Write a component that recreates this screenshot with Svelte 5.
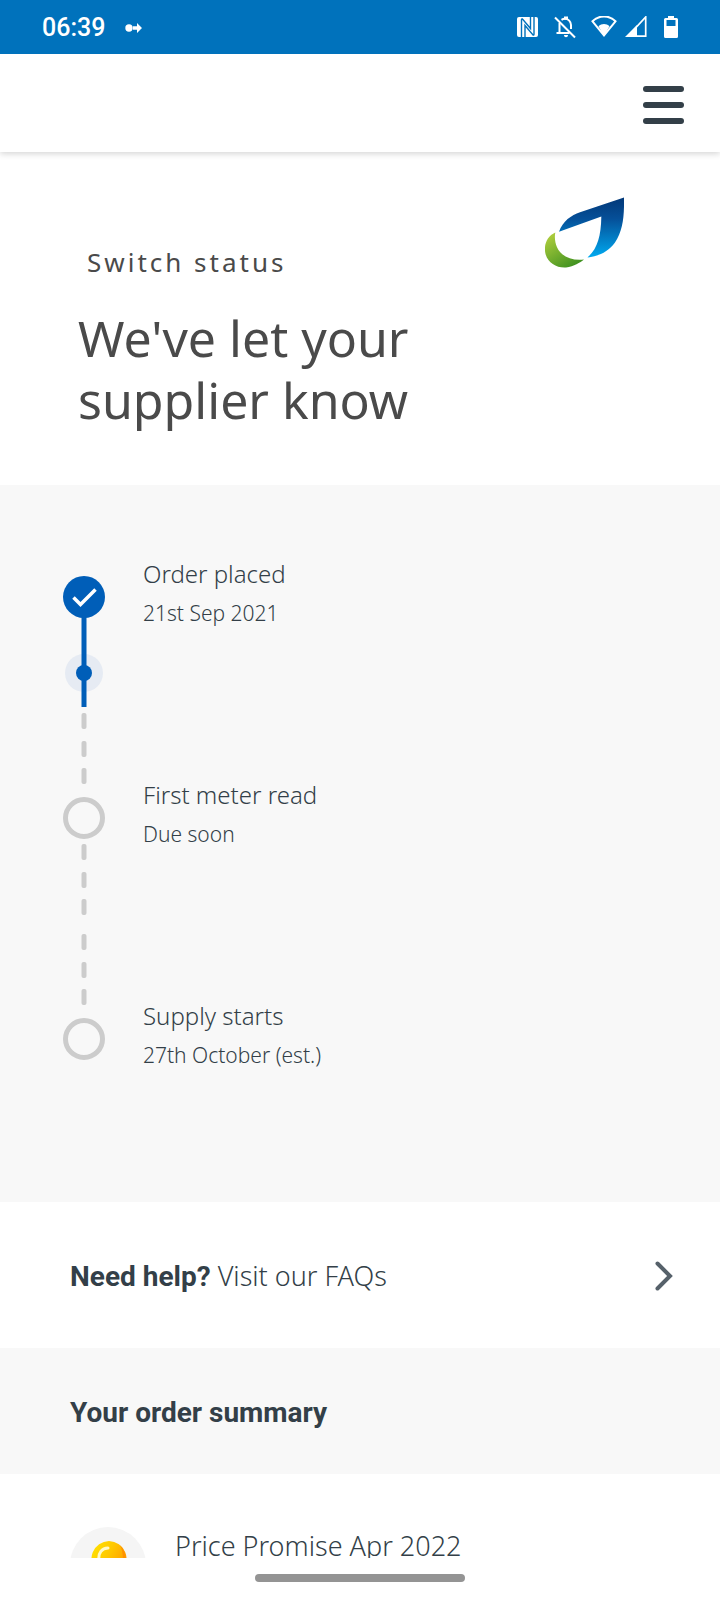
<svelte:head>
  <title>Switch status</title>
</svelte:head>

<script>
  const steps = [
    { title: "Order placed", detail: "21st Sep 2021", done: true, dashes: [137, 165, 192] },
    { title: "First meter read", detail: "Due soon", done: false, dashes: [47, 75, 102, 137, 165, 192] },
    { title: "Supply starts", detail: "27th October (est.)", done: false, dashes: [] }
  ];
</script>

<div class="phone">
  <div class="status-bar">
    <span class="time">06:39</span>
    <svg width="18" height="12" viewBox="0 0 18 12" fill="#fff" aria-hidden="true">
      <circle cx="4" cy="6" r="3.7" />
      <path d="M8 4.2h4V1l5 5-5 5V7.8H8z" />
    </svg>
    <svg class="system" width="162" height="24" viewBox="517 16 162 24" fill="#fff" aria-hidden="true">
      <rect x="517" y="17" width="21" height="20" rx="2" />
      <path d="M525 37V25.500L533 35q1 .5 1-1V17" fill="none" stroke="#0072bc" stroke-width="1.400" />
      <path d="M530.500 17v11.500L522.500 19q-1-.5-1 1v17" fill="none" stroke="#0072bc" stroke-width="1.400" />
      <g fill="none" stroke="#fff" stroke-width="2">
        <path d="M555 17.500L575 37.500" />
        <path d="M561.500 19.800c1-.6 2-1 3.300-1 3.500 0 6.200 2.700 6.200 6.200v4M559.500 23v9.500M556.500 33h13" />
      </g>
      <path d="M564 16.500h4v3h-4zM564 35h4c0 3-4 3-4 0z" />
      <path d="M592.500 21.300C599 14.800 609 14.800 615.500 21.300L604 35.500z" fill="none" stroke="#fff" stroke-width="2" />
      <path d="M598.500 26.300c3-3 8-3 11 0L604 36z" />
      <path d="M645.700 17v19.200H628z" fill="none" stroke="#fff" stroke-width="1.700" />
      <path d="M637 25v12H625z" />
      <path d="M668 16h6v2h2.500q1.500 0 1.500 1.500v17q0 1.500-1.500 1.500h-11q-1.500 0-1.500-1.500v-17q0-1.500 1.500-1.500H668zM666.500 20v6h9v-6z" fill-rule="evenodd" />
    </svg>
  </div>

  <header>
    <button type="button" class="menu" aria-label="Menu">
      <span></span>
      <span></span>
      <span></span>
    </button>
  </header>

  <main>
    <section class="hero">
      <div>
        <p class="label">Switch status</p>
        <h1>We've let your<br />supplier know</h1>
      </div>
      <svg class="logo" width="79" height="71" viewBox="45 50 237 212" aria-hidden="true">
        <defs>
          <linearGradient id="leaf" x1="0" y1="0" x2="0" y2="1">
            <stop offset="0" stop-color="#023878" />
            <stop offset="0.35" stop-color="#054f98" />
            <stop offset="1" stop-color="#00aaf0" />
          </linearGradient>
          <linearGradient id="drop" x1="0" y1="0" x2="0.7" y2="1">
            <stop offset="0" stop-color="#bad440" />
            <stop offset="1" stop-color="#3f9120" />
          </linearGradient>
        </defs>
        <path fill="url(#leaf)" d="M87 154C98 121 124 104 150 95L282 51C283 108 279 150 255 186C235 214 206 227 172 231C201 207 213 170 214 108z" />
        <path fill="url(#drop)" d="M76 156C49 168 40 197 47 222C55 248 81 263 108 261C132 258 150 246 162 237C125 241 94 229 81 200C75 186 73 170 76 156z" />
      </svg>
    </section>

    <section class="progress">
      <ol>
        {#each steps as step}
          <li>
            <svg width="42" height="221" viewBox="0 0 42 221" aria-hidden="true">
              {#if step.done}
                <circle cx="21" cy="97" r="19" fill="#e6ebf3" />
                <path d="M21 21v110" stroke="#005eb8" stroke-width="5" />
                <circle cx="21" cy="97" r="8" fill="#005eb8" />
                <circle cx="21" cy="21" r="21" fill="#005eb8" />
                <path d="M10.500 21.500l7 7L32.500 13.500" fill="none" stroke="#fff" stroke-width="3.500" />
              {:else}
                <circle cx="21" cy="21" r="18.500" fill="none" stroke="#ccc" stroke-width="5" />
              {/if}
              {#each step.dashes as y}
                <rect x="18.500" {y} width="5" height="16" rx="2" fill="#ccc" />
              {/each}
            </svg>
            <div class="step-text">
              <h2>{step.title}</h2>
              <p>{step.detail}</p>
            </div>
          </li>
        {/each}
      </ol>
    </section>

    <a class="faq" href="#faqs">
      <span><strong>Need help?</strong> Visit our FAQs</span>
      <svg width="18" height="30" viewBox="0 0 18 30" fill="none" stroke="#56616a" stroke-width="4" stroke-linecap="round" aria-hidden="true">
        <path d="M2.500 2.500L15 15 2.500 27.500" />
      </svg>
    </a>

    <section class="summary-title">
      <h2>Your order summary</h2>
    </section>

    <section class="plan">
      <svg width="76" height="76" viewBox="0 0 76 76" aria-hidden="true">
        <defs>
          <linearGradient id="bulb" x1="0" y1="0" x2="1" y2="0.6">
            <stop offset="0" stop-color="#ffe600" />
            <stop offset="0.5" stop-color="#ffc800" />
            <stop offset="1" stop-color="#ff9a00" />
          </linearGradient>
        </defs>
        <circle cx="38" cy="38" r="38" fill="#f5f5f5" />
        <path d="M39 14a18 18 0 0 1 12 31l-4 8H31l-4-8A18 18 0 0 1 39 14z" fill="url(#bulb)" />
        <path d="M50 18c5 5 7 12 5 18l-3 7c1-8 2-17-2-25z" fill="#ff9100" />
        <path d="M29 33c-1-7 3-12 9-12" fill="none" stroke="#fff9c8" stroke-width="3" stroke-linecap="round" />
      </svg>
      <p>Price Promise Apr 2022</p>
    </section>
  </main>

  <div class="gesture-bar"><span></span></div>
</div>

<style>
:global(body) {
  margin: 0;
  background: #fff;
}
.phone {
  display: flex;
  flex-direction: column;
  height: 100vh;
  color: #333f48;
  font-family: "Noto Sans", "Open Sans", sans-serif;
  font-weight: 300;
}
h1, h2, p, ol {
  margin: 0;
  padding: 0;
  font-weight: inherit;
}
svg {
  display: block;
  flex: none;
}
.status-bar {
  display: flex;
  flex: none;
  align-items: center;
  gap: 20px;
  height: 54px;
  padding: 2px 41px 0 42px;
  box-sizing: border-box;
  background: #0072bc;
  color: #fff;
}
.time {
  font: 500 25px/32px Roboto, sans-serif;
}
.system {
  margin-left: auto;
}
header {
  display: flex;
  flex: none;
  align-items: center;
  justify-content: flex-end;
  height: 98px;
  padding: 4px 36px 0;
  box-sizing: border-box;
  background: #fff;
  box-shadow: 0 2px 6px rgba(0, 0, 0, 0.16);
  clip-path: inset(0 0 -12px);
  z-index: 1;
}
.menu {
  display: flex;
  flex-direction: column;
  gap: 10px;
  padding: 0;
  border: 0;
  background: none;
  cursor: pointer;
}
.menu span {
  width: 41px;
  height: 6px;
  border-radius: 3px;
  background: #333f48;
}
main {
  flex: 1;
  min-height: 0;
  overflow: hidden;
}
.hero {
  display: flex;
  justify-content: space-between;
  padding: 45px 96px 54px 78px;
  color: #4a4a4a;
}
.label {
  padding: 47px 0 27px 9px;
  font-size: 26px;
  line-height: 36px;
  letter-spacing: 3px;
  font-weight: 400;
}
h1 {
  font-size: 50px;
  line-height: 62px;
  font-weight: 400;
}
.progress {
  padding: 91px 63px 0;
  background: #f8f8f8;
}
ol {
  list-style: none;
}
li {
  display: flex;
  gap: 38px;
}
li:last-child {
  height: 184px;
}
.step-text {
  margin-top: -18px;
}
.step-text h2 {
  font-size: 24px;
  line-height: 32px;
}
.step-text p {
  margin-top: 8px;
  font-size: 21px;
  line-height: 30px;
}
.faq {
  display: flex;
  align-items: center;
  justify-content: space-between;
  height: 146px;
  padding: 2px 47px 0 70px;
  box-sizing: border-box;
  background: #fff;
  color: inherit;
  font-size: 27px;
  line-height: 36px;
  text-decoration: none;
}
.faq strong, .summary-title h2 {
  font-family: Roboto, sans-serif;
  font-size: 28px;
  font-weight: 700;
}
.summary-title {
  padding: 47px 70px 43px;
  background: #f8f8f8;
}
.summary-title h2 {
  line-height: 36px;
}
.plan {
  display: flex;
  gap: 29px;
  padding: 53px 70px;
  font-size: 27px;
  line-height: 38px;
}
.gesture-bar {
  display: flex;
  flex: none;
  justify-content: center;
  height: 42px;
  padding-top: 16px;
  box-sizing: border-box;
  background: #fff;
}
.gesture-bar span {
  width: 210px;
  height: 8px;
  border-radius: 4px;
  background: #949494;
}
</style>
